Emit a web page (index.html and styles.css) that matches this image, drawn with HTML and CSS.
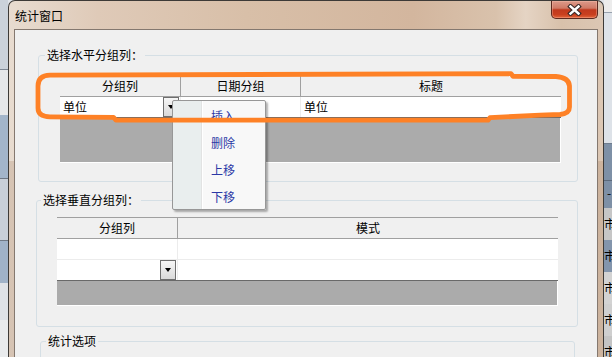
FILE: index.html
```html
<!DOCTYPE html>
<html lang="zh-CN">
<head>
<meta charset="utf-8">
<title>统计窗口</title>
<link rel="stylesheet" href="styles.css">
</head>
<body>
<div class="desktop">
  <div class="bg-left"></div>

  <div class="dialog">
    <div class="titlebar">
      <span class="title">统计窗口</span>
      <div class="close">
        <svg width="15" height="12" viewBox="0 0 15 12">
          <path d="M3.5 2.5 L11.5 9.5 M11.5 2.5 L3.5 9.5" stroke="#3a2a28" stroke-width="4.6" stroke-linecap="square" fill="none"/>
          <path d="M3.5 2.5 L11.5 9.5 M11.5 2.5 L3.5 9.5" stroke="#ffffff" stroke-width="2.4" stroke-linecap="square" fill="none"/>
        </svg>
      </div>
    </div>

    <div class="client">
      <fieldset class="group g1">
        <legend>选择水平分组列：</legend>
        <div class="grid grid1">
          <div class="ghead">
            <div class="hc c1">分组列</div>
            <div class="hc c2">日期分组</div>
            <div class="hc cx">标题</div>
          </div>
          <div class="grow last">
            <div class="cell c1">单位<span class="dd"></span></div>
            <div class="cell c2"></div>
            <div class="cell cx">单位</div>
          </div>
          <div class="gfill fill1"></div>

          <div class="menu">
            <div class="mi">插入</div>
            <div class="mi">删除</div>
            <div class="mi">上移</div>
            <div class="mi">下移</div>
          </div>
        </div>
      </fieldset>

      <fieldset class="group g2">
        <legend>选择垂直分组列：</legend>
        <div class="grid grid2">
          <div class="ghead">
            <div class="hc c1">分组列</div>
            <div class="hc cx">模式</div>
          </div>
          <div class="grow">
            <div class="cell c1"></div>
            <div class="cell cx"></div>
          </div>
          <div class="grow last">
            <div class="cell c1"><span class="dd"></span></div>
            <div class="cell cx"></div>
          </div>
          <div class="gfill fill2"></div>
        </div>
      </fieldset>

      <fieldset class="group g3">
        <legend>统计选项</legend>
        <div class="g3body"></div>
      </fieldset>
    </div>
  </div>

  <div class="bg-right">
    <div class="rtop"></div>
    <div class="rrow rdash">-</div>
    <div class="rrow r1">市</div>
    <div class="rrow r2">市</div>
    <div class="rrow r3">市</div>
    <div class="rrow r4">市</div>
    <div class="rrow r5">市</div>
  </div>

  <svg class="annot" width="612" height="357" viewBox="0 0 612 357">
    <path d="M38 86 Q38 75.5 50 75.2 L511 73.6 L513 76.3 L556 76.5 Q569 77.5 569.5 86 L569.5 107 Q569.5 113.5 560 114.5 L540 115.2 L490 117.6 L488 120.2 L116 120.2 L113.5 117.3 L50 116.8 Q38 116.5 38 108 Z"
          fill="none" stroke="#fe8126" stroke-width="4.8" stroke-linejoin="round"/>
  </svg>
</div>
</body>
</html>
```

FILE: styles.css
```css
html, body {
  margin: 0;
  padding: 0;
}

body {
  width: 612px;
  height: 357px;
  overflow: hidden;
  font-family: "Noto Sans CJK SC", "Noto Sans", sans-serif;
  font-size: 12px;
  color: #000;
  text-spacing-trim: space-all;
}

.desktop {
  position: relative;
  display: flex;
  width: 612px;
  height: 357px;
  overflow: hidden;
  background: #dfe3e8;
}

/* background window strips */
.bg-left {
  width: 8px;
  flex: none;
  background: linear-gradient(to bottom,
    #cbd2da 0 69px, #7f8894 69px 70px,
    #e6e7e9 70px 115px,
    #a3b5ca 115px 178px, #6f7884 178px 179px,
    #c8cfd8 179px 240px, #6f7884 240px 241px,
    #a0b2c7 241px 283px,
    #dfe2e6 283px 320px,
    #e9ebed 320px);
}

.bg-right {
  width: 8px;
  flex: none;
  display: flex;
  flex-direction: column;
  overflow: hidden;
}

.rtop {
  height: 181px;
  flex: none;
  background: linear-gradient(to bottom,
    #ececec 0 12px, #98a2ae 12px 13px,
    #dde2e8 13px 143px, #6f7d8f 143px 144px,
    #7e90a6 144px 180px, #5c6a7c 180px 181px);
}

.rrow {
  height: 32px;
  flex: none;
  line-height: 32px;
  white-space: nowrap;
  color: #000;
}

.rdash {
  height: 27px;
  line-height: 24px;
  background: #7e90a6;
  text-indent: 3px;
}

.r1 {
  background: #c6c6c6;
}

.r2 {
  background: #8395ac;
}

.r3 {
  background: #d3d3d3;
}

.r4 {
  background: #cfcfcf;
}

.r5 {
  background: #c4c4c4;
}

/* dialog window */
.dialog {
  width: 596px;
  height: 420px;
  flex: none;
  box-sizing: border-box;
  border: 1px solid #3d3a37;
  border-bottom: none;
  border-radius: 7px 7px 0 0;
  padding: 0 5px;
  display: flex;
  flex-direction: column;
  background:
    linear-gradient(to bottom, rgba(0, 0, 0, 0) 0 160px, rgba(150, 110, 80, 0.22) 160px),
    linear-gradient(90deg, #e8dcd0 0%, #dfcab8 15%, #d8bfa8 40%, #d3b69e 68%, #d9c2ac 82%, #e5d4c4 87%, #d8c1ab 93%, #dcc7b4 100%);
}

.titlebar {
  height: 28px;
  flex: none;
  display: flex;
  align-items: flex-start;
}

.title {
  margin: 7px 0 0 1px;
  line-height: 16px;
  font-size: 12px;
  color: #000;
}

.close {
  margin-left: auto;
  width: 47px;
  height: 18px;
  box-sizing: border-box;
  border: 1px solid #5c2a20;
  border-top: none;
  border-radius: 0 0 5px 5px;
  background: linear-gradient(to bottom, #dc9a8a 0%, #d07a66 42%, #c0391d 52%, #c9401f 80%, #e2653a 100%);
  display: flex;
  align-items: center;
  justify-content: center;
  box-shadow: inset 0 0 0 1px rgba(255, 200, 180, 0.35);
}

.close svg {
  display: block;
}

.client {
  flex: 1;
  border: 1px solid #84786f;
  background: #f0f0f0;
  padding-top: 18px;
  display: flex;
  flex-direction: column;
  align-items: flex-start;
}

/* group boxes */
.group {
  margin: 0;
  padding: 0;
  border: 1px solid #d5dfe5;
  border-radius: 3px;
  min-width: 0;
  box-sizing: border-box;
  flex: none;
}

.group legend {
  padding: 0 2px;
  line-height: 14px;
  background: #f0f0f0;
}

.g1 {
  margin-left: 23px;
  width: 540px;
}

.g1 legend {
  margin-left: 6px;
}

.g2 {
  margin-left: 21px;
  margin-top: 11px;
  width: 542px;
}

.g2 legend {
  margin-left: 4px;
}

.g3 {
  margin-left: 25px;
  margin-top: 7px;
  width: 535px;
}

.g3 legend {
  margin-left: 5px;
}

.g3body {
  height: 60px;
}

/* grids */
.grid {
  position: relative;
  width: 501px;
  border-top: 1px solid #a0a0a0;
}

.grid1 {
  margin: 13px 0 18px 21px;
}

.grid2 {
  margin: 10px 0 20px 20px;
}

.ghead {
  display: flex;
  height: 20px;
  background: #f0f0f0;
  border-bottom: 1px solid #a0a0a0;
}

.hc {
  box-sizing: border-box;
  border-right: 1px solid #a0a0a0;
  display: flex;
  align-items: center;
  justify-content: center;
  line-height: 14px;
}

.grow {
  display: flex;
  height: 20px;
  background: #fff;
  border-bottom: 1px solid #ececec;
}

.grow.last {
  border-bottom-color: #696969;
}

.cell {
  box-sizing: border-box;
  border-right: 1px solid #ececec;
  display: flex;
  align-items: center;
  padding-left: 3px;
  line-height: 14px;
}

.c1 {
  width: 121px;
  flex: none;
}

.c2 {
  width: 120px;
  flex: none;
}

.cx {
  flex: 1;
  border-right: none;
}

.dd {
  box-sizing: border-box;
  width: 16px;
  height: 20px;
  margin-left: auto;
  margin-right: 1px;
  border: 1px solid #6f6f6f;
  background: linear-gradient(to bottom, #f6f6f6, #d9d9d9);
  display: flex;
  align-items: center;
  justify-content: center;
}

.dd::after {
  content: "";
  border-left: 3.5px solid transparent;
  border-right: 3.5px solid transparent;
  border-top: 4px solid #000;
}

.gfill {
  background: #ababab;
  border-right: 1px solid #fff;
  border-bottom: 1px solid #fff;
}

.fill1 {
  height: 44px;
}

.fill2 {
  height: 24px;
}

/* context menu */
.menu {
  position: absolute;
  left: 112px;
  top: 24px;
  width: 94px;
  height: 110px;
  box-sizing: border-box;
  border: 1px solid #979797;
  border-radius: 2px;
  padding-top: 1px;
  background: linear-gradient(90deg, #e9eeee 0 28px, #e2e3e3 28px 29px, #ffffff 29px 30px, #f8f8f8 30px);
  box-shadow: 2px 2px 2px rgba(0, 0, 0, 0.3);
  z-index: 2;
}

.mi {
  height: 27px;
  line-height: 27px;
  padding-left: 38px;
  color: #2b38a6;
}

/* annotation overlay */
.annot {
  position: absolute;
  left: 0;
  top: 0;
  pointer-events: none;
  z-index: 5;
}
```
